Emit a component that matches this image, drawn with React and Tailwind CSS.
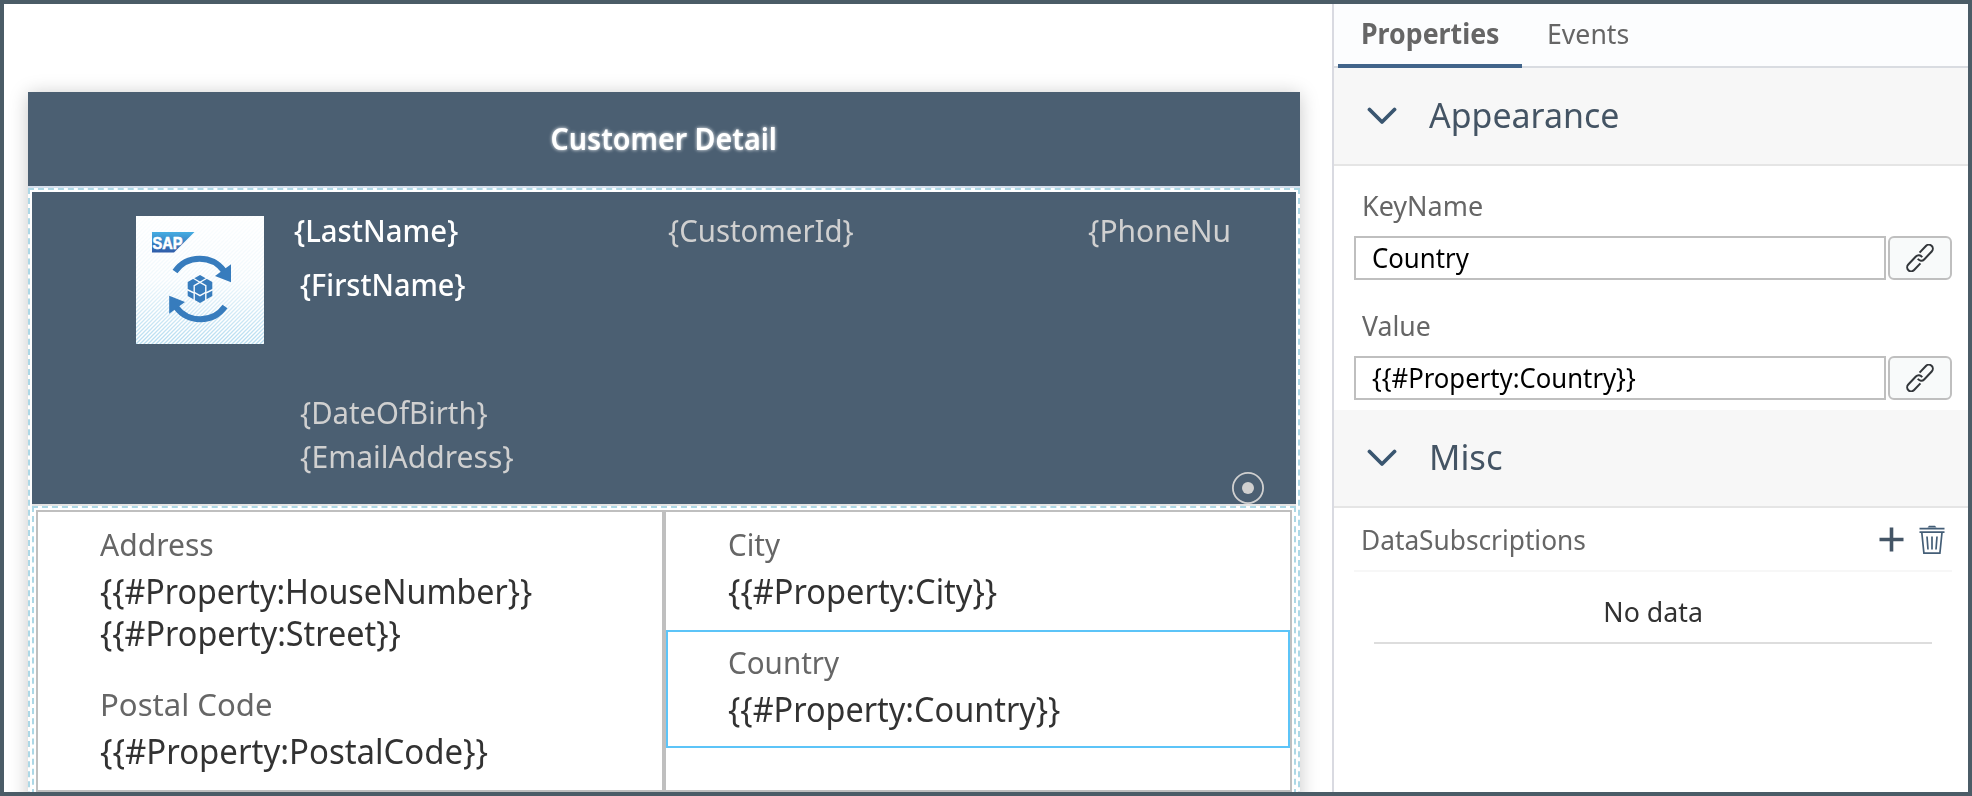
import React from "react";

function Text({ className = "", children }) {
  return (
    <span className={"block w-max origin-left whitespace-pre " + className}>{children}</span>
  );
}

function LogoTile() {
  return (
    <div className="h-32 w-32 shrink-0 bg-white">
      <svg viewBox="0 0 128 128" className="block h-32 w-32">
        <defs>
          <pattern id="stripes" width="4" height="4" patternUnits="userSpaceOnUse">
            <path d="M-1 1L1 -1M0 4L4 0M3 5L5 3" stroke="#b5dcf0" strokeWidth="1.3" />
          </pattern>
          <linearGradient id="fade" x1="0" y1="0" x2="0" y2="1">
            <stop offset="0" stopColor="#fff" stopOpacity="0.05" />
            <stop offset="0.5" stopColor="#fff" stopOpacity="0.2" />
            <stop offset="1" stopColor="#fff" stopOpacity="1" />
          </linearGradient>
          <mask id="stripeMask">
            <rect width="128" height="128" fill="url(#fade)" />
          </mask>
          <linearGradient id="sap" x1="0" y1="0" x2="0" y2="1">
            <stop offset="0" stopColor="#45ade2" />
            <stop offset="1" stopColor="#2f5ba8" />
          </linearGradient>
        </defs>
        <rect width="128" height="128" fill="url(#stripes)" mask="url(#stripeMask)" />
        <path d="M16 16H58.5L38 36.5H16Z" fill="url(#sap)" />
        <text x="16.5" y="33" fill="#fff" fontFamily="Liberation Sans, sans-serif" fontWeight="700" fontSize="17" textLength="30" lengthAdjust="spacingAndGlyphs" stroke="#fff" strokeWidth="0.6">SAP</text>
        <g fill="none" stroke="#377cbd" strokeWidth="6">
          <path d="M39 55.5A30.3 30.3 0 0 1 88 55" />
          <path d="M89 90.5A30.3 30.3 0 0 1 40 91" />
        </g>
        <path d="M95 48.3V66.3L79 60Z" fill="#377cbd" />
        <path d="M33.2 79.7V97.7L49 86Z" fill="#377cbd" />
        <path d="M64 59L76.3 66V80L64 87L51.7 80V66Z" fill="#377cbd" />
        <g fill="none" stroke="#f7fbfe" strokeWidth="1.4">
          <path d="M64 66.3L69.8 69.7V76.3L64 79.7L58.2 76.3V69.7Z" />
          <path d="M56 61.5L64 66.3L72 61.5" />
          <path d="M51 73.5L58.2 77V86M77 73.5L69.8 77V86" />
        </g>
      </svg>
    </div>
  );
}

function LinkIcon() {
  return (
    <svg viewBox="0 0 28 28" className="block h-7 w-7" fill="none" stroke="#32363a" strokeWidth="2">
      <g transform="translate(14 14) rotate(-46.5)">
        <path d="M3.6 -4H12.8A4 4 0 0 1 12.8 4H1.8A4 4 0 0 1 -2.1 -1" />
        <path d="M-3.6 4H-12.8A4 4 0 0 1 -12.8 -4H-1.8A4 4 0 0 1 2.1 1" />
      </g>
    </svg>
  );
}

function PlusIcon() {
  return (
    <svg viewBox="0 0 25 25" className="block h-[25px] w-[25px]">
      <path d="M12.5 0.5V24.5M0.5 12.5H24.5" stroke="#445566" strokeWidth="3.6" />
    </svg>
  );
}

function TrashIcon() {
  return (
    <svg viewBox="0 0 26 30" className="block h-[30px] w-[26px]" fill="none" stroke="#445e77" strokeWidth="1.7">
      <path d="M8.5 2.6L10 0.8H16L17.5 2.6Z" fill="#445e77" stroke="none" />
      <path d="M0.5 3.6H25.5M0.5 7.2H25.5" />
      <path d="M2.8 7.5L4.9 28.2H20.9L23 7.5" />
      <path d="M8 11.5L9 24.5M13 11.5V24.5M18 11.5L17 24.5" />
    </svg>
  );
}

function SectionHeader({ title, textClass }) {
  return (
    <div className="flex h-[98px] border-b-2 border-[#e5e5e5] bg-[#f7f7f7] pl-[33px]">
      <svg viewBox="0 0 30 18" className="mt-[39px] h-[18px] w-[30px]" fill="none">
        <path d="M2.5 2.5L15 15L27.5 2.5" stroke="#3a5670" strokeWidth="3.8" strokeLinecap="round" strokeLinejoin="round" />
      </svg>
      <Text className={"ml-8 text-[34.3px] leading-[93px] text-[#445464] " + textClass}>{title}</Text>
    </div>
  );
}

function Field({ label, labelClass, value, valueClass }) {
  return (
    <div>
      <Text className={"ml-2 text-[28px] leading-[40px] text-[#666] " + labelClass}>{label}</Text>
      <div className="mt-[11px] flex gap-0.5">
        <div className="h-11 w-[532px] border-2 border-[#bfbfbf] bg-white pl-4">
          <Text className={"text-[28px] leading-[39px] text-black " + valueClass}>{value}</Text>
        </div>
        <div className="flex h-11 w-16 items-center justify-center rounded-md border-2 border-[#bfbfbf] bg-[#f8fafa]">
          <LinkIcon />
        </div>
      </div>
    </div>
  );
}

const label = "text-[30.8px] leading-[42px] text-[#666] ";
const value = "text-[35px] leading-[42px] text-[#323232] ";
const light = "text-[30.8px] leading-[44px] text-[#d0d0d0] ";
const white = "text-[30.8px] font-medium leading-[44px] text-white ";

export default function App() {
  return (
    <div className="flex h-[796px] w-[1972px] overflow-hidden border-4 border-[#4b5c67] bg-white font-['Noto_Sans','Open_Sans',sans-serif]">
      <div className="w-[1328px] shrink-0 overflow-hidden pl-6 pt-[88px]">
        <div className="h-[760px] w-[1272px] bg-white shadow-[0_2px_18px_rgba(0,0,0,0.22)]">
          <div className="flex h-24 justify-center border-b-2 border-[#d6dfec] bg-[#4b5f72]">
            <span className="block origin-center scale-x-[0.93] whitespace-pre text-[30.8px] font-semibold leading-[93px] text-white [text-shadow:0_0_4px_#fff]">Customer Detail</span>
          </div>
          <div className="h-[720px] border-2 border-dashed border-[#add8e6] p-0.5">
            <div className="relative flex h-[312px] bg-[#4b5f72] pl-[104px] pt-4">
              <div className="pt-2">
                <LogoTile />
              </div>
              <div className="ml-[30px] w-[374px]">
                <Text className={white + "scale-x-[0.95]"}>{"{LastName}"}</Text>
                <div className="ml-1.5 mt-2.5">
                  <Text className={white + "scale-x-[0.938]"}>{"{FirstName}"}</Text>
                  <Text className={light + "mt-[84px] scale-x-[0.952]"}>{"{DateOfBirth}"}</Text>
                  <Text className={light + "scale-x-[0.976]"}>{"{EmailAddress}"}</Text>
                </div>
              </div>
              <div className="w-[420px]">
                <Text className={light + "scale-x-[0.954]"}>{"{CustomerId}"}</Text>
              </div>
              <Text className={light + "scale-x-[0.974]"}>{"{PhoneNu"}</Text>
              <svg viewBox="0 0 32 32" className="absolute bottom-0 right-8 h-8 w-8">
                <circle cx="16" cy="16" r="15.1" fill="none" stroke="#d0d0d0" strokeWidth="1.8" />
                <circle cx="16" cy="16" r="6" fill="#d0d0d0" />
              </svg>
            </div>
            <div className="h-[400px] border-t-2 border-[#e5e5e5]">
              <div className="h-[390px] border-2 border-dashed border-[#add8e6] p-0.5">
                <div className="flex h-[282px] border-2 border-[#bfbfbf]">
                  <div className="w-[624px] pl-[62px] pt-[11px]">
                    <Text className={label + "scale-x-[0.976]"}>Address</Text>
                    <div className="mt-[5px]">
                      <Text className={value + "scale-x-[0.921]"}>{"{{#Property:HouseNumber}}"}</Text>
                      <Text className={value + "scale-x-[0.925]"}>{"{{#Property:Street}}"}</Text>
                    </div>
                    <Text className={label + "mt-[29px] scale-x-[1.01]"}>Postal Code</Text>
                    <Text className={value + "mt-[5px] scale-x-[0.941]"}>{"{{#Property:PostalCode}}"}</Text>
                  </div>
                  <div className="w-[628px] border-l-4 border-[#bfbfbf]">
                    <div className="h-[118px] pl-[62px] pt-[11px]">
                      <Text className={label + "scale-x-[0.96]"}>City</Text>
                      <Text className={value + "mt-[5px] scale-x-[0.931]"}>{"{{#Property:City}}"}</Text>
                    </div>
                    <div className="h-[118px] w-[624px] border-2 border-[#5cc4f8] pl-[60px] pt-[9px]">
                      <Text className={label + "scale-x-[0.961]"}>Country</Text>
                      <Text className={value + "mt-[5px] scale-x-[0.926]"}>{"{{#Property:Country}}"}</Text>
                    </div>
                  </div>
                </div>
              </div>
            </div>
          </div>
        </div>
      </div>

      <div className="min-w-0 flex-1 border-l-2 border-[#d9dae1]">
        <div className="flex h-16 border-b-2 border-[#d9dce1] bg-[#fcfdfe] pl-1">
          <div className="h-16 w-[184px] border-b-4 border-[#41648a] pl-[23px]">
            <Text className="scale-x-[0.955] text-[28px] font-bold leading-[59px] text-[#666]">Properties</Text>
          </div>
          <Text className="ml-[25px] scale-x-[0.952] text-[28px] leading-[59px] text-[#666]">Events</Text>
        </div>
        <SectionHeader title="Appearance" textClass="scale-x-[0.989]" />
        <div className="flex h-[244px] flex-col gap-[25px] pl-5 pt-[19px]">
          <Field label="KeyName" labelClass="scale-x-[0.963]" value="Country" valueClass="scale-x-[0.92]" />
          <Field label="Value" labelClass="scale-x-[0.951]" value="{{#Property:Country}}" valueClass="scale-x-[0.918]" />
        </div>
        <SectionHeader title="Misc" textClass="scale-x-[1.01]" />
        <div className="ml-5 w-[598px]">
          <div className="flex h-16 border-b-2 border-[#f7f7f7] pl-[7px]">
            <Text className="mt-[11px] scale-x-[0.938] text-[28px] leading-[40px] text-[#666]">DataSubscriptions</Text>
            <div className="ml-auto flex gap-[15px] pr-[7px] pt-[17px]">
              <div className="pt-[2px]">
                <PlusIcon />
              </div>
              <TrashIcon />
            </div>
          </div>
          <div className="mx-5 flex h-[72px] justify-center border-b-2 border-[#ddd]">
            <span className="mt-[19px] block scale-x-[0.955] whitespace-pre text-[28px] leading-[40px] text-[#323232]">No data</span>
          </div>
        </div>
      </div>
    </div>
  );
}
